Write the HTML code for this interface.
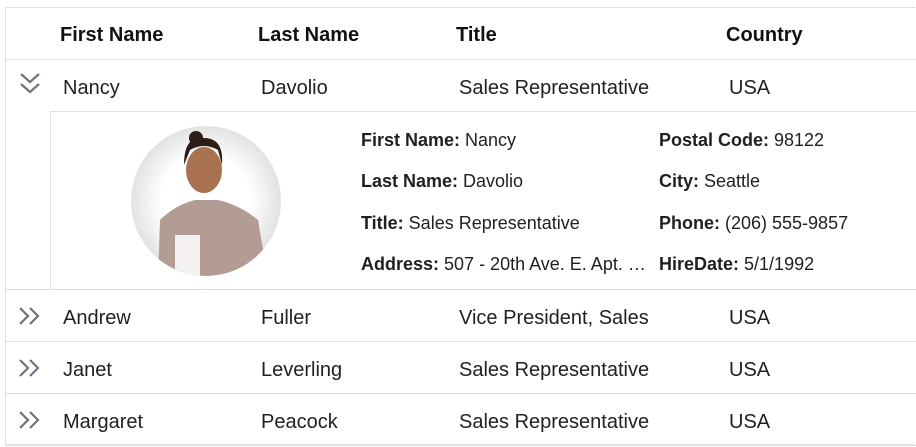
<!DOCTYPE html>
<html><head><style>
body{margin:0;background:#fff;font-family:"Liberation Sans",sans-serif;color:#212121;}
.t{position:absolute;left:5px;top:7px;width:910px;height:438px;border:1px solid #e0e0e0;border-right:none;box-sizing:border-box;}
.hl{position:absolute;left:5px;width:911px;height:1px;background:#e0e0e0;}
.c{position:absolute;font-size:20px;white-space:nowrap;}
.h{font-weight:bold;font-size:20px;color:#111;}
.d{position:absolute;font-size:18px;white-space:nowrap;}
.d b{font-weight:bold;}
</style></head><body>
<div class="t"></div>
<div class="hl" style="top:59px"></div>
<div class="hl" style="top:111px;left:50px;width:866px"></div>
<div style="position:absolute;left:50px;top:111px;width:1px;height:178px;background:#e0e0e0"></div>
<div class="hl" style="top:289px"></div>
<div class="hl" style="top:341px"></div>
<div class="hl" style="top:393px"></div>
<div class="hl" style="top:445px"></div>

<div class="c h" style="left:60px;top:24px">First Name</div>
<div class="c h" style="left:258px;top:24px">Last Name</div>
<div class="c h" style="left:456px;top:24px">Title</div>
<div class="c h" style="left:726px;top:24px">Country</div>

<svg style="position:absolute;left:20px;top:73px" width="20" height="22" viewBox="0 0 20 22"><path d="M1 1l9 8 9-8M1 11l9 8 9-8" fill="none" stroke="#6d7480" stroke-width="2.2"/></svg>
<div class="c" style="left:63px;top:77px">Nancy</div>
<div class="c" style="left:261px;top:77px">Davolio</div>
<div class="c" style="left:459px;top:77px">Sales Representative</div>
<div class="c" style="left:729px;top:77px">USA</div>

<svg style="position:absolute;left:0;top:0" width="916" height="447">
<defs><radialGradient id="g" cx="0.5" cy="0.5" r="0.5"><stop offset="0.6" stop-color="#fff"/><stop offset="1" stop-color="#e2e2e2"/></radialGradient><clipPath id="cp"><circle cx="206" cy="201" r="75"/></clipPath></defs>
<circle cx="206" cy="201" r="75" fill="url(#g)"/>
<g clip-path="url(#cp)">
<path d="M160 220 Q175 205 195 200 L218 200 Q240 205 258 220 L268 280 L158 280Z" fill="#b39c94"/>
<rect x="175" y="235" width="25" height="45" fill="#f4f2f0"/>
<ellipse cx="204" cy="170" rx="18" ry="23" fill="#a8714f"/>
<path d="M184 165 Q184 135 204 138 Q224 138 222 165 L218 150 Q204 142 190 150Z" fill="#2e1c16"/>
<circle cx="196" cy="138" r="7" fill="#2e1c16"/>
</g>
</svg>

<div class="d" style="left:361px;top:130px"><b>First Name:</b> Nancy</div>
<div class="d" style="left:361px;top:171px"><b>Last Name:</b> Davolio</div>
<div class="d" style="left:361px;top:213px"><b>Title:</b> Sales Representative</div>
<div class="d" style="left:361px;top:254px;width:294px;overflow:hidden;text-overflow:ellipsis"><b>Address:</b> 507 - 20th Ave. E. Apt. 2A, Seattle</div>
<div class="d" style="left:659px;top:130px"><b>Postal Code:</b> 98122</div>
<div class="d" style="left:659px;top:171px"><b>City:</b> Seattle</div>
<div class="d" style="left:659px;top:213px"><b>Phone:</b> (206) 555-9857</div>
<div class="d" style="left:659px;top:254px"><b>HireDate:</b> 5/1/1992</div>

<svg style="position:absolute;left:19px;top:307px" width="22" height="20" viewBox="0 0 22 20"><path d="M1 1l8 8-8 8M11 1l8 8-8 8" fill="none" stroke="#6d7480" stroke-width="2.2"/></svg>
<div class="c" style="left:63px;top:307px">Andrew</div>
<div class="c" style="left:261px;top:307px">Fuller</div>
<div class="c" style="left:459px;top:307px">Vice President, Sales</div>
<div class="c" style="left:729px;top:307px">USA</div>

<svg style="position:absolute;left:19px;top:359px" width="22" height="20" viewBox="0 0 22 20"><path d="M1 1l8 8-8 8M11 1l8 8-8 8" fill="none" stroke="#6d7480" stroke-width="2.2"/></svg>
<div class="c" style="left:63px;top:359px">Janet</div>
<div class="c" style="left:261px;top:359px">Leverling</div>
<div class="c" style="left:459px;top:359px">Sales Representative</div>
<div class="c" style="left:729px;top:359px">USA</div>

<svg style="position:absolute;left:19px;top:411px" width="22" height="20" viewBox="0 0 22 20"><path d="M1 1l8 8-8 8M11 1l8 8-8 8" fill="none" stroke="#6d7480" stroke-width="2.2"/></svg>
<div class="c" style="left:63px;top:411px">Margaret</div>
<div class="c" style="left:261px;top:411px">Peacock</div>
<div class="c" style="left:459px;top:411px">Sales Representative</div>
<div class="c" style="left:729px;top:411px">USA</div>
</body></html>
